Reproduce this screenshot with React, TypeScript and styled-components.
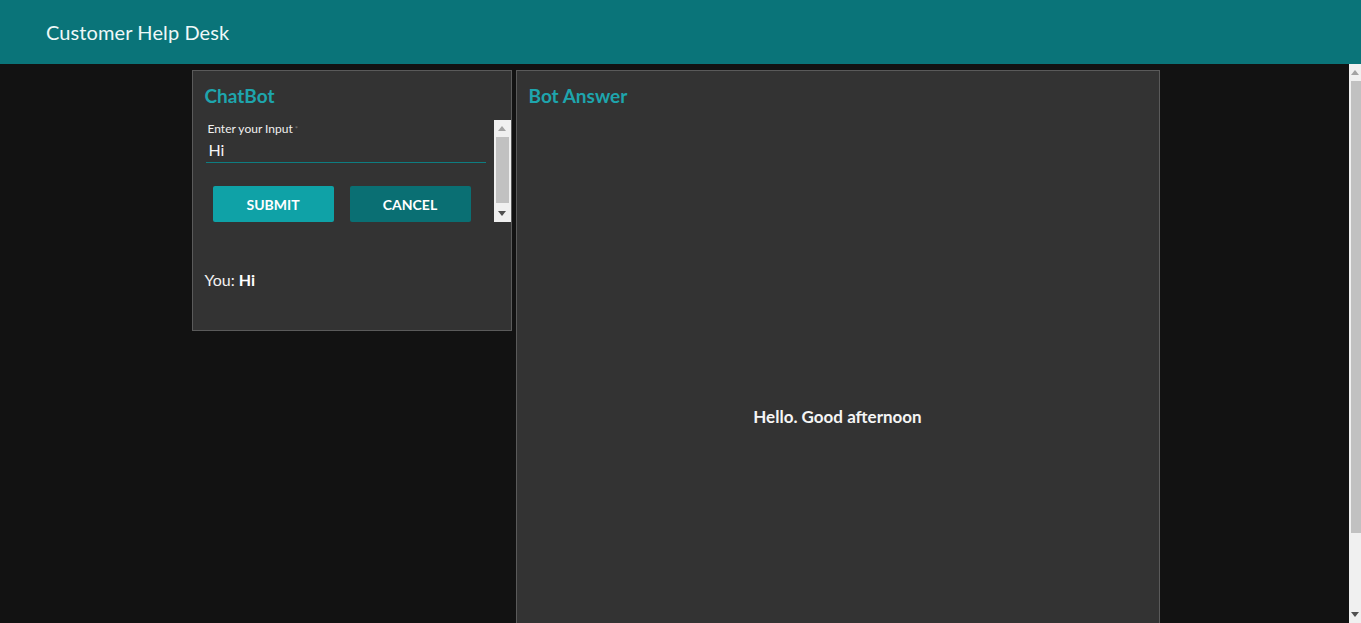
import React from "react";
import styled, { createGlobalStyle } from "styled-components";

const GlobalStyle = createGlobalStyle`
  html, body { margin: 0; padding: 0; height: 100%; overflow: hidden; background: #121212; }
  #root { height: 100%; }
  * { box-sizing: border-box; }
`;

const FONT = `Lato, "Open Sans", "Noto Sans", sans-serif`;

const Shell = styled.div`
  display: flex;
  flex-direction: column;
  height: 100%;
  font-family: ${FONT};
`;

const Header = styled.header`
  flex: 0 0 64px;
  display: flex;
  align-items: center;
  padding-left: 46px;
  background: #0a7479;
  color: #eef8f8;
  font-size: 20px;
  letter-spacing: 0.1px;
`;

const Body = styled.div`
  flex: 1;
  min-height: 0;
  display: flex;
  background: #121212;
`;

const Viewport = styled.main`
  flex: 1;
  min-width: 0;
  overflow: hidden;
`;

/* ---- drawn scrollbar ---- */
const Bar = styled.div<{ $width: number }>`
  flex: 0 0 ${(p) => p.$width}px;
  display: flex;
  flex-direction: column;
  background: #f0f0f0;
`;

const BarButton = styled.div`
  flex: 0 0 17px;
  display: flex;
  align-items: center;
  justify-content: center;
`;

const BarTrack = styled.div<{ $inset: string }>`
  flex: 1;
  display: flex;
  flex-direction: column;
  padding: ${(p) => p.$inset};
`;

const BarThumb = styled.div`
  background: #c1c1c1;
`;

function Arrow({ dir, color }: { dir: "up" | "down"; color: string }) {
  return (
    <svg width="8" height="5" viewBox="0 0 8 5">
      {dir === "up" ? (
        <polygon points="4,0 8,5 0,5" fill={color} />
      ) : (
        <polygon points="0,0 8,0 4,5" fill={color} />
      )}
    </svg>
  );
}

function ScrollBar({
  width,
  thumb,
  inset,
}: {
  width: number;
  thumb: number;
  inset: string;
}) {
  return (
    <Bar $width={width}>
      <BarButton>
        <Arrow dir="up" color="#a3a3a3" />
      </BarButton>
      <BarTrack $inset={inset}>
        <BarThumb style={{ height: thumb }} />
      </BarTrack>
      <BarButton>
        <Arrow dir="down" color="#505050" />
      </BarButton>
    </Bar>
  );
}

/* ---- page ---- */
const Columns = styled.div`
  display: grid;
  grid-template-columns: 320px 644px;
  column-gap: 4px;
  align-items: start;
  width: 968px;
  margin: 0 auto;
  padding: 6px 0 6px 2px;
  box-sizing: content-box;
`;

const Card = styled.section<{ $height: number }>`
  display: flex;
  flex-direction: column;
  height: ${(p) => p.$height}px;
  background: #333333;
  border: 1px solid #5a5a5a;
  color: #f2f2f2;
`;

const CardTitle = styled.h2`
  margin: 0;
  padding: 13px 12px 0;
  font-size: 19px;
  line-height: 24px;
  font-weight: 700;
  color: #1ea5ad;
`;

const FormRow = styled.div`
  display: flex;
  height: 102px;
  margin-top: 12px;
`;

const FormContent = styled.div`
  flex: 1;
  min-width: 0;
  overflow: hidden;
  padding: 0 8px 0 13px;
`;

const Field = styled.label`
  display: flex;
  flex-direction: column;
  padding-top: 1px;
  border-bottom: 1px solid #0e7d81;
`;

const FieldLabel = styled.span`
  padding-left: 2px;
  font-size: 12px;
  line-height: 16px;
  color: #f0f0f0;

  &::after {
    content: " *";
    font-size: 8px;
    vertical-align: top;
    color: #777;
  }
`;

const Input = styled.input`
  margin: 3px 0 2px;
  padding: 0 0 0 3px;
  border: none;
  outline: none;
  background: transparent;
  color: #f5f5f5;
  font-family: ${FONT};
  font-size: 16px;
  line-height: 20px;
`;

const ButtonRow = styled.div`
  display: flex;
  gap: 16px;
  padding: 23px 0 6px 7px;
`;

const Button = styled.button<{ $variant: "primary" | "secondary" }>`
  width: 121px;
  height: 36px;
  border: none;
  border-radius: 2px;
  background: ${(p) => (p.$variant === "primary" ? "#0fa2a7" : "#0a6f73")};
  color: #ffffff;
  font-family: ${FONT};
  font-size: 14px;
  font-weight: 700;
  text-transform: uppercase;
  cursor: pointer;
`;

const Transcript = styled.p`
  margin: 48px 12px 0;
  font-size: 16px;
  line-height: 20px;
  color: #f2f2f2;

  strong { font-weight: 700; color: #ffffff; }
`;

const AnswerBody = styled.div`
  display: flex;
  justify-content: center;
  padding-top: 298px;
  font-size: 17px;
  font-weight: 700;
  color: #f5f5f5;
`;

export default function App() {
  return (
    <>
      <GlobalStyle />
      <Shell>
        <Header>Customer Help Desk</Header>
        <Body>
          <Viewport>
            <Columns>
              <Card $height={261}>
                <CardTitle>ChatBot</CardTitle>
                <FormRow>
                  <FormContent>
                    <Field>
                      <FieldLabel>Enter your Input</FieldLabel>
                      <Input defaultValue="Hi" />
                    </Field>
                    <ButtonRow>
                      <Button $variant="primary">Submit</Button>
                      <Button $variant="secondary">Cancel</Button>
                    </ButtonRow>
                  </FormContent>
                  <ScrollBar width={17} thumb={66} inset="0 2px" />
                </FormRow>
                <Transcript>
                  You: <strong>Hi</strong>
                </Transcript>
              </Card>
              <Card $height={637}>
                <CardTitle>Bot Answer</CardTitle>
                <AnswerBody>Hello. Good afternoon</AnswerBody>
              </Card>
            </Columns>
          </Viewport>
          <ScrollBar width={12} thumb={452} inset="0 0 0 2px" />
        </Body>
      </Shell>
    </>
  );
}
